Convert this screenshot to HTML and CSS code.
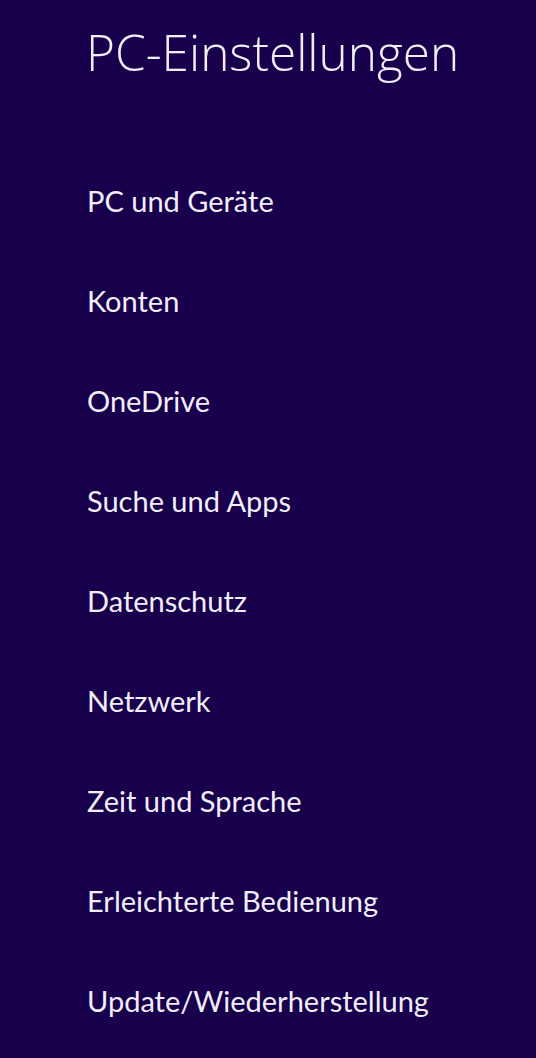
FILE: index.html
```html
<!DOCTYPE html>
<html lang="de">
<head>
<meta charset="utf-8">
<link rel="stylesheet" href="styles.css">
</head>
<body>
<div class="page">
  <h1 class="title">PC-Einstellungen</h1>
  <ul class="menu">
    <li class="item">PC und Geräte</li>
    <li class="item">Konten</li>
    <li class="item">OneDrive</li>
    <li class="item">Suche und Apps</li>
    <li class="item">Datenschutz</li>
    <li class="item">Netzwerk</li>
    <li class="item">Zeit und Sprache</li>
    <li class="item">Erleichterte Bedienung</li>
    <li class="item">Update/Wiederherstellung</li>
  </ul>
</div>
</body>
</html>
```
FILE: styles.css
```css
html, body {
  margin: 0;
  padding: 0;
  background: #18004d;
}
.page {
  width: 536px;
  height: 1058px;
  box-sizing: border-box;
  padding-left: 86px;
  color: #f0eef6;
}
.title {
  margin: 0;
  padding-top: 18px;
  font-family: "Open Sans", "Noto Sans", sans-serif;
  font-weight: 300;
  font-size: 49.5px;
  line-height: 68px;
}
.menu {
  list-style: none;
  margin: 0;
  padding: 95px 0 0 1px;
  display: flex;
  flex-direction: column;
  gap: 60px;
}
.item {
  font-family: Lato, "Open Sans", sans-serif;
  font-size: 29px;
  line-height: 40px;
  font-weight: 400;
}
```
